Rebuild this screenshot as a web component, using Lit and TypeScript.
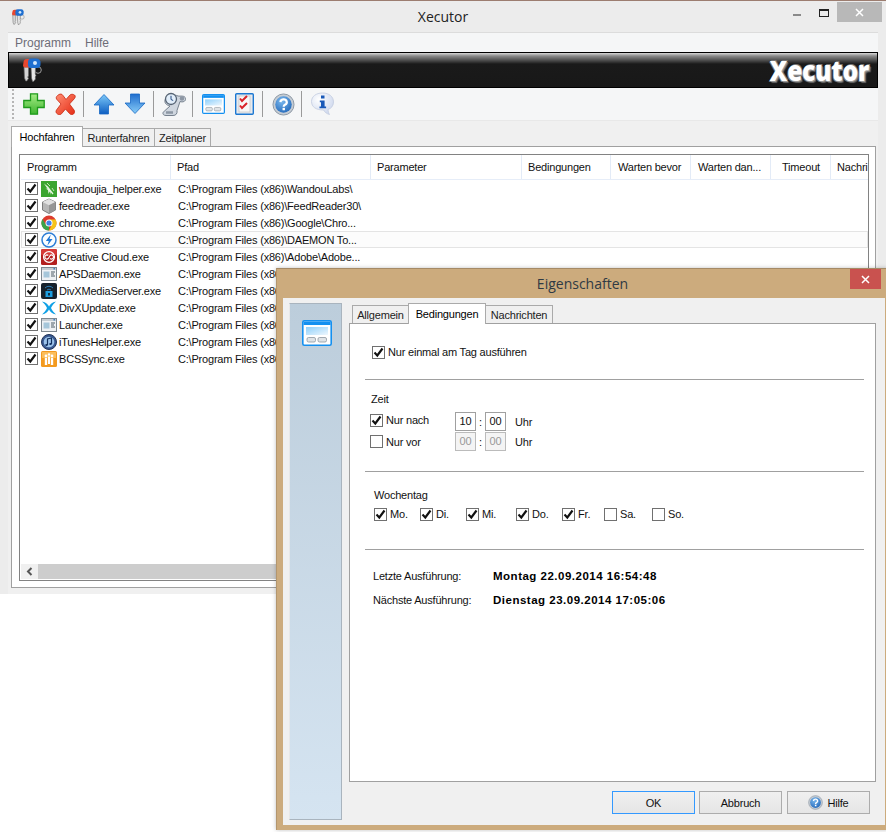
import { LitElement, html, css, svg } from "lit";
import { customElement } from "lit/decorators.js";

const icon = (w: number, h: number, body: unknown, vb = `0 0 ${w} ${h}`) =>
  html`<svg class="ico" width=${w} height=${h} viewBox=${vb}>${body}</svg>`;

const keys = (w: number, h: number) =>
  icon(w, h, svg`
    <circle cx="16" cy="12" r="3.300" fill="none" stroke="#9a9a9a" stroke-width="1"/>
    <path d="M2 9h4.500v9l-.8 1 .8 1.500-1.800 2.500h-1L2.500 20z" fill="#d4d4d4" stroke="#6a6a6a" stroke-width=".7"/>
    <path d="M9 9h4.500l-.2 7 .7 1.500-.7 1.500.2 2-2 2.500h-1L9.500 20z" fill="#e6e6e6" stroke="#5a5a5a" stroke-width=".7"/>
    <path d="M1.500 4.500a3.500 3.500 0 0 1 3.500-3.500h3v8.500H3a2 2 0 0 1-2-2z" fill="#e8482f"/>
    <path d="M6 4a3.500 3.500 0 0 1 3.500-3.500H15a4 4 0 0 1 3.500 3v3A3.500 3.500 0 0 1 15 10H9a3 3 0 0 1-3-3z" fill="#1f6fd0"/>
    <circle cx="13" cy="5" r="2" fill="#d5e8fb"/>
  `, "0 0 20 24");

const helpIcon = (s: number, id: string) =>
  icon(s, s, svg`
    <defs><radialGradient id=${id} cx=".4" cy=".3" r=".8"><stop offset="0" stop-color="#7ab8ee"/><stop offset="1" stop-color="#1f65b8"/></radialGradient></defs>
    <circle cx="12" cy="12" r="11" fill="#c5ccd4" stroke="#8b96a3"/>
    <circle cx="12" cy="12" r="8.600" fill="url(#${id})"/>
    <path d="M8.800 9.500a3.300 3 0 1 1 4.700 2.800c-1 .6-1.300 1-1.300 2" fill="none" stroke="#fff" stroke-width="2.300"/>
    <rect x="11" y="15.500" width="2.500" height="2.500" fill="#fff"/>
  `, "0 0 24 24");

const winIcon = (w: number, h: number, id: string) =>
  icon(w, h, svg`
    <defs><linearGradient id=${id} x1="0" y1="0" x2="1" y2="1"><stop offset="0" stop-color="#8fd0fb"/><stop offset="1" stop-color="#eef7fd"/></linearGradient></defs>
    <rect x=".8" y=".8" width="28.400" height="24.400" rx="1.500" fill="#fff" stroke="#1490f0" stroke-width="1.600"/>
    <rect x="1.500" y="1.500" width="27" height="3.500" fill="#1490f0"/>
    <rect x="4" y="7" width="22" height="8" fill="url(#${id})"/>
    <rect x="5" y="17.500" width="8.500" height="4.500" rx="1.500" fill="#dfe3e6" stroke="#8d979f" stroke-width=".8"/>
    <rect x="16" y="17.500" width="8.500" height="4.500" rx="1.500" fill="#dfe3e6" stroke="#8d979f" stroke-width=".8"/>
  `, "0 0 30 26");

const appWin = svg`
  <rect x=".5" y="1.500" width="15" height="13" fill="#eef1f4" stroke="#7e8890"/>
  <rect x="1" y="2" width="14" height="2" fill="#c5ccd2"/>
  <rect x="2.500" y="5.500" width="6" height="6" fill="#a5c6da"/>
  <path d="M10 6h4M10 8h3M10 10h4" stroke="#4f5c66"/>
  <rect x="12.500" y="2" width="1.500" height="1.500" fill="#3f7fc0"/>
`;

const listIcons: Record<string, unknown> = {
  wandoujia: svg`<rect width="16" height="16" fill="#3ba52f"/>
    <path d="M3 2.500l4 3 5.500 7-1 1-2-2.500.5 3-1.500-3.500-1 2.500-.5-4-2.500-1.500 2 .2z" fill="#e6f5e0"/>
    <path d="M6 2l3 3M11 7l2 3" stroke="#bfe5b5" stroke-width="1"/>`,
  feed: svg`<path d="M8 1l6.500 3v8L8 15.500 1.500 12V4z" fill="#b7b7b7" stroke="#7d7d7d"/>
    <path d="M1.500 4L8 7.300 14.500 4 8 1z" fill="#e1e1e1"/><path d="M8 7.300v8L14.500 12V4z" fill="#969696"/>`,
  chrome: svg`<circle cx="8" cy="8" r="7.500" fill="#dc3b2f"/>
    <path d="M14.700 4.500A7.500 7.500 0 0 1 8 15.500L11 9.500 8 4.500z" fill="#f6c417"/>
    <path d="M8 15.500A7.500 7.500 0 0 1 1.500 4l3.500 6 3 1z" fill="#3aa24a"/>
    <circle cx="8" cy="8" r="3.500" fill="#fff"/><circle cx="8" cy="8" r="2.600" fill="#3f82e8"/>`,
  dt: svg`<circle cx="8" cy="8" r="7" fill="#fafdff" stroke="#2d7ed6" stroke-width="1.500"/>
    <path d="M9.800 2.500L4.800 9h3l-1.500 4.800L11.500 7H8.500z" fill="#1f78d8"/>`,
  cc: svg`<rect width="16" height="16" rx="1.500" fill="#b3201f"/>
    <rect width="16" height="6" rx="1.500" fill="#d63a36"/>
    <circle cx="8" cy="8" r="5.400" fill="none" stroke="#fff" stroke-width="1.300"/>
    <path d="M7.300 6.500a2 2 0 1 0 0 3l1.800-3a2 2 0 1 1 0 3" fill="none" stroke="#fff" stroke-width="1.100"/>`,
  app: appWin,
  divxm: svg`<rect width="16" height="16" rx="2" fill="#18222c"/>
    <path d="M4 5a5.500 5.500 0 0 1 8 0M6 7a3 3 0 0 1 4 0" fill="none" stroke="#2d7fb5"/>
    <rect x="4.500" y="8" width="7" height="6" fill="#1d9ee0"/>
    <rect x="7" y="10" width="2" height="2.500" fill="#0b2f47"/>`,
  divxu: svg`<path d="M1 1.500c4 .5 6 3 7 5 1-2 3-4.500 7-5-2 2-4 4-5 6.500 1 2.500 3 4.500 5 6.500-4-.5-6-3-7-5-1 2-3 4.500-7 5 2-2 4-4 5-6.500-1-2.500-3-4.500-5-6.500z" fill="#10a1e6"/>`,
  itunes: svg`<circle cx="8" cy="8" r="7.500" fill="#3a5a92" stroke="#1f3358"/>
    <circle cx="8" cy="8" r="5.300" fill="#9cc3ea"/>
    <path d="M6.500 11V5l4-1v6" fill="none" stroke="#12305e" stroke-width="1.200"/>
    <ellipse cx="5.500" cy="11" rx="1.300" ry="1" fill="#12305e"/><ellipse cx="9.500" cy="10" rx="1.300" ry="1" fill="#12305e"/>`,
  bcs: svg`<rect width="16" height="16" rx="1.500" fill="#f39a1f"/><rect x="1" y="1" width="14" height="6" fill="#fbbd5a"/>
    <circle cx="5" cy="5" r="1.400" fill="#fff"/><circle cx="11" cy="5" r="1.400" fill="#fff"/><circle cx="8" cy="3.500" r="1.200" fill="#fff"/>
    <path d="M3.800 7h2.400v7H3.800zM9.800 7h2.400v7H9.800zM7 5.500h2V13H7z" fill="#fff"/>`,
};

const programs: [string, string, string][] = [
  ["wandoujia_helper.exe", "wandoujia", "C:\\Program Files (x86)\\WandouLabs\\"],
  ["feedreader.exe", "feed", "C:\\Program Files (x86)\\FeedReader30\\"],
  ["chrome.exe", "chrome", "C:\\Program Files (x86)\\Google\\Chro..."],
  ["DTLite.exe", "dt", "C:\\Program Files (x86)\\DAEMON To..."],
  ["Creative Cloud.exe", "cc", "C:\\Program Files (x86)\\Adobe\\Adobe..."],
  ["APSDaemon.exe", "app", "C:\\Program Files (x86)\\Common Fil..."],
  ["DivXMediaServer.exe", "divxm", "C:\\Program Files (x86)\\DivX\\DivX M..."],
  ["DivXUpdate.exe", "divxu", "C:\\Program Files (x86)\\DivX\\DivX U..."],
  ["Launcher.exe", "app", "C:\\Program Files (x86)\\Launcher\\"],
  ["iTunesHelper.exe", "itunes", "C:\\Program Files (x86)\\iTunes\\"],
  ["BCSSync.exe", "bcs", "C:\\Program Files (x86)\\Microsoft Of..."],
];

const columns: [string, number, number][] = [
  ["Programm", 150, 6],
  ["Pfad", 200, 6],
  ["Parameter", 151, 6],
  ["Bedingungen", 89, 6],
  ["Warten bevor", 80, 7],
  ["Warten dan...", 80, 7],
  ["Timeout", 60, 11],
  ["Nachri", 39, 6],
];

const days: [string, boolean, number][] = [
  ["Mo.", true, 46],
  ["Di.", true, 46],
  ["Mi.", true, 50],
  ["Do.", true, 46],
  ["Fr.", true, 42],
  ["Sa.", false, 48],
  ["So.", false, 40],
];

const box = (on: boolean) => html`<span class="box">
  ${on
    ? html`<svg width="11" height="11" viewBox="0 0 11 11"><path d="M1.500 5.500l2.800 3 5.200-7" fill="none" stroke="#111" stroke-width="2.100"/></svg>`
    : ""}
</span>`;

@customElement("app-root")
export class AppRoot extends LitElement {
  static styles = css`
    :host {
      display: block;
      position: relative;
      width: 886px;
      height: 832px;
      overflow: hidden;
      background: #fff;
      font-family: "Liberation Sans", "Noto Sans", sans-serif;
      font-size: 11px;
      letter-spacing: -.2px;
      color: #111;
    }
    .ico { display: block; flex: none; }
    .main {
      height: 594px;
      box-sizing: border-box;
      border-top: 1px solid #9c7d70;
      background: #ececec;
      display: flex;
      flex-direction: column;
    }
    .titlebar {
      height: 31px;
      flex: none;
      display: flex;
      align-items: center;
      padding-left: 11px;
      position: relative;
      box-sizing: border-box;
    }
    .title {
      position: absolute;
      left: 0;
      right: 0;
      top: 6px;
      text-align: center;
      font-size: 14px;
      line-height: 20px;
      letter-spacing: 0;
      color: #222;
      font-family: "Open Sans", sans-serif;
    }
    .winbtn { position: absolute; }
    .min { left: 793px; top: 13px; width: 8px; height: 2px; background: #8a8a8a; }
    .max { left: 819px; top: 8px; width: 8px; height: 5px; border: 1px solid #222; border-top-width: 2px; }
    .close {
      left: 837px; top: 1px; width: 45px; height: 20px;
      background: #b8b8b8;
      display: flex; align-items: center; justify-content: center;
    }
    .client {
      flex: 1;
      margin: 0 8px;
      display: flex;
      flex-direction: column;
      min-height: 0;
    }
    .menu {
      height: 20px;
      flex: none;
      box-sizing: border-box;
      border-top: 1px solid #dcdcdc;
      background: #f5f6f7;
      display: flex;
      gap: 14px;
      padding-left: 7px;
      align-items: center;
      color: #6d6d78;
      font-size: 12px;
      letter-spacing: 0;
    }
    .banner {
      height: 36px;
      flex: none;
      box-sizing: border-box;
      border: 1px solid #000;
      background: linear-gradient(#d8d8d8 0, #8a8a8a 3px, #1a1a1a 11px, #181818 100%);
      display: flex;
      align-items: center;
      justify-content: space-between;
      padding: 0 8px 0 13px;
    }
    .brand {
      color: #fff;
      font-family: "Open Sans", sans-serif;
      font-weight: 800;
      font-size: 28px;
      line-height: 34px;
      letter-spacing: -.3px;
      transform: scaleX(.88);
      transform-origin: right center;
      text-shadow: 1px 1px 0 #999, -1px 1px 0 #777, 1px -1px 0 #777, 2px 2px 1px #666;
    }
    .toolbar {
      height: 33px;
      flex: none;
      box-sizing: border-box;
      background: #f5f6f7;
      border-bottom: 1px solid #e8e8e8;
      display: flex;
      align-items: center;
      padding-left: 4px;
    }
    .grip {
      width: 2px;
      height: 30px;
      margin-right: 9px;
      background: repeating-linear-gradient(#b5b5b5 0 2px, transparent 2px 4px);
    }
    .tsep { width: 1px; height: 26px; background: #9a9a9a; flex: none; }
    .tbtn { display: flex; justify-content: center; flex: none; }
    .tabarea {
      flex: 1;
      min-height: 0;
      background: #f0f0f0;
      padding: 5px 2px 6px 3px;
      display: flex;
      flex-direction: column;
    }
    .tabs { display: flex; align-items: flex-end; height: 20px; flex: none; position: relative; z-index: 1; }
    .tab {
      box-sizing: border-box;
      height: 18px;
      border: 1px solid #aaa;
      border-bottom: none;
      margin-left: -1px;
      background: #f0f0f0;
      display: flex;
      align-items: center;
      justify-content: center;
      color: #222;
    }
    .tab.on {
      height: 21px;
      background: #fff;
      margin-bottom: -1px;
      color: #000;
      position: relative;
      z-index: 2;
      padding-bottom: 1px;
    }
    .panel {
      flex: 1;
      min-height: 0;
      box-sizing: border-box;
      border: 1px solid #a0a0a0;
      background: #fff;
      padding: 7px 6px 6px 7px;
      display: flex;
    }
    .list {
      flex: 1;
      box-sizing: border-box;
      border: 1px solid #828282;
      padding-left: 1px;
      display: flex;
      flex-direction: column;
      overflow: hidden;
    }
    .head { display: flex; height: 25px; flex: none; border-bottom: 1px solid #e6edf8; box-sizing: border-box; }
    .hcell {
      box-sizing: border-box;
      flex: none;
      border-right: 1px solid #e3ebf7;
      line-height: 25px;
      white-space: nowrap;
      overflow: hidden;
    }
    .rows { flex: 1; min-height: 0; }
    .row { display: flex; height: 17px; align-items: center; box-sizing: border-box; }
    .row.sel { border: 1px solid #e4e4e4; background: #fcfcfc; margin-right: 0; }
    .row .box { margin-left: 4px; margin-right: 3px; }
    .row.sel .box { margin-left: 3px; }
    .pname { width: 117px; margin-left: 2px; white-space: nowrap; flex: none; }
    .ppath { margin-left: 2px; white-space: nowrap; flex: none; }
    .box {
      box-sizing: border-box;
      width: 13px;
      height: 13px;
      flex: none;
      border: 1px solid #707070;
      background: #fff;
      display: flex;
      align-items: center;
      justify-content: center;
    }
    .sbar { height: 15px; display: flex; flex: none; margin: 0 0 1px 0; }
    .sbtn { width: 17px; background: #f0f0f0; display: flex; align-items: center; justify-content: center; flex: none; }
    .sthumb { flex: 1; background: #cdcdcd; }

    .dialog {
      position: absolute;
      left: 276px;
      top: 268px;
      width: 612px;
      height: 562px;
      box-sizing: border-box;
      background: #ccab7d;
      border-top: 1px solid #a58a66;
      border-left: 1px solid #b3966e;
      display: flex;
      flex-direction: column;
      box-shadow: 0 0 4px rgba(0, 0, 0, .25);
    }
    .dtitle {
      height: 29px;
      flex: none;
      text-align: center;
      font-family: "Open Sans", sans-serif;
      font-size: 14px;
      line-height: 30px;
      letter-spacing: 0;
      color: #2f3a44;
      position: relative;
    }
    .dclose {
      position: absolute;
      left: 573px;
      top: 0;
      width: 31px;
      height: 20px;
      background: #c9524f;
      display: flex;
      align-items: center;
      justify-content: center;
    }
    .dbody {
      margin-left: 6px;
      width: 602px;
      height: 527px;
      flex: none;
      box-sizing: border-box;
      background: #f0f0f0;
      padding: 5px 0 5px 6px;
      display: flex;
      gap: 7px;
    }
    .side {
      width: 53px;
      flex: none;
      box-sizing: border-box;
      border: 1px solid #a9b4be;
      border-left-color: #e8e8e8;
      background: linear-gradient(#bccddb, #d5e4f1);
      padding: 16px 0 0 12px;
    }
    .dcol { width: 527px; flex: none; display: flex; flex-direction: column; }
    .dtabs { display: flex; align-items: flex-end; height: 20px; padding-left: 3px; position: relative; z-index: 1; flex: none; }
    .dpanel {
      height: 459px;
      flex: none;
      box-sizing: border-box;
      border: 1px solid #a0a0a0;
      background: #fff;
      padding: 20px 11px 0 15px;
    }
    .ck { display: flex; align-items: center; height: 16px; gap: 3px; }
    .ck1 { margin-left: 7px; }
    .up { margin-bottom: 3px; }
    hr { border: none; height: 1px; background: #a0a0a0; margin: 0; }
    .hr1 { margin-top: 19px; }
    .hr2 { margin-top: 20px; }
    .hr3 { margin-top: 28px; }
    .lbl { line-height: 14px; }
    .zeit { margin: 12px 0 0 6px; }
    .trow {
      display: grid;
      grid-template-columns: 85px 21px 9px 21px 9px auto;
      align-items: center;
      height: 19px;
      margin-left: 5px;
    }
    .trow.first { margin-top: 6px; }
    .trow.next { margin-top: 1px; }
    .inp {
      box-sizing: border-box;
      height: 19px;
      border: 1px solid #a0a0a0;
      background: #fff;
      line-height: 17px;
      text-align: center;
    }
    .inp.off { background: #f4f4f4; color: #999; border-color: #bbb; }
    .colon { text-align: center; }
    .wtag { margin: 16px 0 0 9px; }
    .drow { display: flex; margin: 5px 0 0 9px; height: 14px; }
    .day { display: flex; align-items: center; gap: 3px; flex: none; }
    .info { display: grid; grid-template-columns: 120px auto; margin-left: 8px; row-gap: 10px; margin-top: 19px; line-height: 14px; }
    .val {
      font-family: "Liberation Sans", sans-serif;
      font-weight: 700;
      font-size: 11.5px;
      letter-spacing: .5px;
      color: #000;
    }
    .btns { display: flex; gap: 4px; margin: 9px 6px 0 0; justify-content: flex-end; flex: none; }
    .btn {
      box-sizing: border-box;
      width: 83px;
      height: 23px;
      border: 1px solid #acacac;
      background: linear-gradient(#f0f0f0, #e5e5e5);
      display: flex;
      align-items: center;
      justify-content: center;
      gap: 4px;
    }
    .btn.def { border-color: #3399ff; }
    .btn.help { margin-left: 1px; }
  `;

  private toolbar() {
    const btn = (w: number, body: unknown) => html`<div class="tbtn" style="width:${w}px">${body}</div>`;
    const sep = html`<div class="tsep"></div>`;
    return html`<div class="toolbar">
      <div class="grip"></div>
      ${btn(22, icon(22, 22, svg`
        <defs><linearGradient id="gp" x1="0" y1="0" x2="0" y2="1"><stop offset="0" stop-color="#a6ec86"/><stop offset="1" stop-color="#3eb52f"/></linearGradient></defs>
        <path d="M7.500 .8h7v6.700h6.700v7h-6.700v6.700h-7v-6.700H.8v-7h6.700z" fill="url(#gp)" stroke="#1f9a1c" stroke-width="1.300"/>`))}
      <div class="tbtn" style="width:9px"></div>
      ${btn(22, icon(22, 22, svg`
        <defs><linearGradient id="rx" x1="0" y1="0" x2="1" y2="1"><stop offset="0" stop-color="#ff8d73"/><stop offset="1" stop-color="#e52b14"/></linearGradient></defs>
        <path d="M5 1.500c1.500-.8 3-.5 4 1l3 4 4-4.500c1-1 3-1 4.500 0 1 1 1 2 0 3.500L15.500 11l4.500 6c1 1.500 .5 3-.5 4s-3 .8-4-.5L11.500 16l-4 4.800c-1 1-2.500 1.200-4 .2S1.500 18.500 2.500 17L7 11 2.500 6C1.500 4.500 3 2.500 5 1.500z" fill="url(#rx)" stroke="#c9270f" stroke-width=".8"/>`))}
      <div class="tbtn" style="width:7px"></div>${sep}<div class="tbtn" style="width:9px"></div>
      ${btn(22, icon(22, 22, svg`
        <defs><linearGradient id="au" x1="0" y1="0" x2="0" y2="1"><stop offset="0" stop-color="#7cc8f8"/><stop offset="1" stop-color="#0d5ec2"/></linearGradient></defs>
        <path d="M11 1.500L21 12h-5.500v9h-9v-9H1z" fill="url(#au)" stroke="#1668c4" stroke-width=".8"/>`))}
      <div class="tbtn" style="width:9px"></div>
      ${btn(22, icon(22, 22, svg`
        <defs><linearGradient id="ad" x1="0" y1="0" x2="0" y2="1"><stop offset="0" stop-color="#1f6dce"/><stop offset="1" stop-color="#88cdf8"/></linearGradient></defs>
        <path d="M11 20.500L21 10h-5.500V1h-9v9H1z" fill="url(#ad)" stroke="#1668c4" stroke-width=".8"/>`))}
      <div class="tbtn" style="width:7px"></div>${sep}<div class="tbtn" style="width:8px"></div>
      ${btn(24, icon(24, 24, svg`
        <path d="M3 8c1-5 9-6 13-4 2 .5 7-1 7.500 2.500.5 3-3 4-5.500 3l-3 9c.5 3-1 5-4 5H4c-3.500 0-4-3-1.500-4.500L8 14C4 13 2.500 11 3 8z" fill="#cfd6df" stroke="#75808d"/>
        <circle cx="9" cy="7" r="5.500" fill="#e2eefa" stroke="#566373" stroke-width="1.300"/><path d="M9 3.800v3.700l2.200 1" stroke="#244a80" fill="none"/>
        <circle cx="20" cy="6.500" r="2.300" fill="#8d97a4"/><path d="M4 20.500h7" stroke="#8d97a4" stroke-width="2.500"/>`))}
      <div class="tbtn" style="width:6px"></div>${sep}<div class="tbtn" style="width:9px"></div>
      ${btn(23, winIcon(23, 20, "w1"))}
      <div class="tbtn" style="width:10px"></div>
      ${btn(19, icon(19, 22, svg`
        <rect x=".7" y=".7" width="17.600" height="20.600" rx="1" fill="#e7eaee" stroke="#1c78d2" stroke-width="1.400"/>
        <rect x="4" y="3" width="11" height="16" fill="#f7f7f7" stroke="#bbb" stroke-width=".6"/>
        <path d="M5 5.500l2 2.500 5-5M5 12.500l2 2.500 5-5" fill="none" stroke="#d9232a" stroke-width="2"/>`))}
      <div class="tbtn" style="width:8px"></div>${sep}<div class="tbtn" style="width:9px"></div>
      ${btn(23, helpIcon(23, "h1"))}
      <div class="tbtn" style="width:6px"></div>${sep}<div class="tbtn" style="width:9px"></div>
      ${btn(23, icon(23, 24, svg`
        <defs><radialGradient id="ib" cx=".35" cy=".3" r=".9"><stop offset="0" stop-color="#fff"/><stop offset="1" stop-color="#c4d0ea"/></radialGradient></defs>
        <path d="M11.500 1C18 1 22.500 4.500 22.500 10c0 4-2.500 6.500-5.500 7.500 0 2 1 4 1.500 5-2.500-.5-5-2.500-6-4.500C5 18 .5 15 .5 9.500.5 4.500 5 1 11.500 1z" fill="url(#ib)" stroke="#c3cbe0" stroke-width=".8"/>
        <rect x="10" y="3.500" width="3.500" height="3" fill="#1858b8"/><path d="M8.800 8.500h4.800v6h1.500v1.800H8.500v-1.800h1.500v-4.200H8.800z" fill="#1858b8"/>`))}
    </div>`;
  }

  render() {
    return html`
      <div class="main">
        <div class="titlebar">
          ${keys(14, 16)}
          <div class="title">Xecutor</div>
          <div class="winbtn min"></div>
          <div class="winbtn max"></div>
          <div class="winbtn close">
            <svg width="9" height="9" viewBox="0 0 9 9"><path d="M1 1l7 7M8 1L1 8" stroke="#fff" stroke-width="1.500"/></svg>
          </div>
        </div>
        <div class="client">
          <div class="menu"><span>Programm</span><span>Hilfe</span></div>
          <div class="banner">
            ${keys(20, 24)}
            <div class="brand">Xecutor</div>
          </div>
          ${this.toolbar()}
          <div class="tabarea">
            <div class="tabs">
              <div class="tab on" style="width:72px;margin-left:0">Hochfahren</div>
              <div class="tab" style="width:73px">Runterfahren</div>
              <div class="tab" style="width:57px">Zeitplaner</div>
            </div>
            <div class="panel">
              <div class="list">
                <div class="head">
                  ${columns.map(
                    ([t, w, p]) => html`<div class="hcell" style="width:${w}px;padding-left:${p}px">${t}</div>`
                  )}
                </div>
                <div class="rows">
                  ${programs.map(
                    ([n, k, p], i) => html`<div class="row ${i === 3 ? "sel" : ""}">
                      ${box(true)} ${icon(16, 16, listIcons[k])}
                      <span class="pname">${n}</span>
                      <span class="ppath">${p}</span>
                    </div>`
                  )}
                </div>
                <div class="sbar">
                  <div class="sbtn">
                    <svg width="7" height="9" viewBox="0 0 7 9"><path d="M5.500 1L2 4.500 5.500 8" fill="none" stroke="#555" stroke-width="2"/></svg>
                  </div>
                  <div class="sthumb"></div>
                </div>
              </div>
            </div>
          </div>
        </div>
      </div>

      <div class="dialog">
        <div class="dtitle">
          Eigenschaften
          <div class="dclose">
            <svg width="9" height="9" viewBox="0 0 9 9"><path d="M1 1l7 7M8 1L1 8" stroke="#fff" stroke-width="1.500"/></svg>
          </div>
        </div>
        <div class="dbody">
          <div class="side">${winIcon(30, 26, "w2")}</div>
          <div class="dcol">
            <div class="dtabs">
              <div class="tab" style="width:57px;margin-left:0">Allgemein</div>
              <div class="tab on" style="width:78px">Bedingungen</div>
              <div class="tab" style="width:68px">Nachrichten</div>
            </div>
            <div class="dpanel">
              <div class="ck ck1">${box(true)}<span>Nur einmal am Tag ausführen</span></div>
              <hr class="hr1" />
              <div class="lbl zeit">Zeit</div>
              <div class="trow first">
                <div class="ck up">${box(true)}<span>Nur nach</span></div>
                <div class="inp">10</div><div class="colon">:</div><div class="inp">00</div>
                <div></div><div>Uhr</div>
              </div>
              <div class="trow next">
                <div class="ck">${box(false)}<span>Nur vor</span></div>
                <div class="inp off">00</div><div class="colon">:</div><div class="inp off">00</div>
                <div></div><div>Uhr</div>
              </div>
              <hr class="hr2" />
              <div class="lbl wtag">Wochentag</div>
              <div class="drow">
                ${days.map(
                  ([d, on, w]) => html`<div class="day" style="width:${w}px">${box(on)}<span>${d}</span></div>`
                )}
              </div>
              <hr class="hr3" />
              <div class="info">
                <div>Letzte Ausführung:</div><div class="val">Montag 22.09.2014 16:54:48</div>
                <div>Nächste Ausführung:</div><div class="val">Dienstag 23.09.2014 17:05:06</div>
              </div>
            </div>
            <div class="btns">
              <div class="btn def">OK</div>
              <div class="btn">Abbruch</div>
              <div class="btn help">${helpIcon(15, "h2")}<span>Hilfe</span></div>
            </div>
          </div>
        </div>
      </div>
    `;
  }
}
